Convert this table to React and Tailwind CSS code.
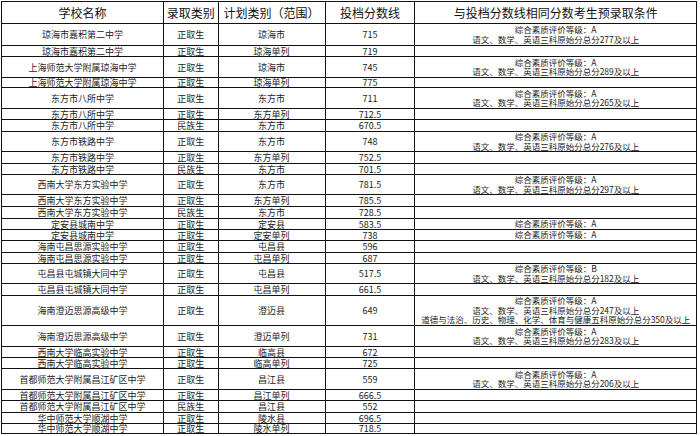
const COND_A = '综合素质评价等级：A';
const total = (n) => `语文、数学、英语三科原始分总分${n}及以上`;

const rows = [
  { h: 22, name: '琼海市嘉积第二中学', kind: '正取生', plan: '琼海市', score: '715', cond: [COND_A, total(277)] },
  { h: 11, name: '琼海市嘉积第二中学', kind: '正取生', plan: '琼海单列', score: '719' },
  { h: 21, name: '上海师范大学附属琼海中学', kind: '正取生', plan: '琼海市', score: '745', cond: [COND_A, total(289)] },
  { h: 10, name: '上海师范大学附属琼海中学', kind: '正取生', plan: '琼海单列', score: '775' },
  { h: 21, name: '东方市八所中学', kind: '正取生', plan: '东方市', score: '711', cond: [COND_A, total(265)] },
  { h: 11, name: '东方市八所中学', kind: '正取生', plan: '东方单列', score: '712.5' },
  { h: 12, name: '东方市八所中学', kind: '民族生', plan: '东方市', score: '670.5' },
  { h: 20, name: '东方市铁路中学', kind: '正取生', plan: '东方市', score: '748', cond: [COND_A, total(276)] },
  { h: 12, name: '东方市铁路中学', kind: '正取生', plan: '东方单列', score: '752.5' },
  { h: 11, name: '东方市铁路中学', kind: '民族生', plan: '东方市', score: '701.5' },
  { h: 20, name: '西南大学东方实验中学', kind: '正取生', plan: '东方市', score: '781.5', cond: [COND_A, total(297)] },
  { h: 12, name: '西南大学东方实验中学', kind: '正取生', plan: '东方单列', score: '785.5' },
  { h: 12, name: '西南大学东方实验中学', kind: '民族生', plan: '东方市', score: '728.5' },
  { h: 11, name: '定安县城南中学', kind: '正取生', plan: '定安县', score: '583.5', cond: [COND_A] },
  { h: 11, name: '定安县城南中学', kind: '正取生', plan: '定安单列', score: '738', cond: [COND_A] },
  { h: 12, name: '海南屯昌思源实验中学', kind: '正取生', plan: '屯昌县', score: '596' },
  { h: 11, name: '海南屯昌思源实验中学', kind: '正取生', plan: '屯昌单列', score: '687' },
  { h: 20, name: '屯昌县屯城镇大同中学', kind: '正取生', plan: '屯昌县', score: '517.5', cond: ['综合素质评价等级：B', total(182)] },
  { h: 12, name: '屯昌县屯城镇大同中学', kind: '正取生', plan: '屯昌单列', score: '661.5' },
  {
    h: 30, name: '海南澄迈思源高级中学', kind: '正取生', plan: '澄迈县', score: '649',
    cond: [COND_A, total(247), '道德与法治、历史、物理、化学、体育与健康五科原始分总分350及以上'],
  },
  { h: 21, name: '海南澄迈思源高级中学', kind: '正取生', plan: '澄迈单列', score: '731', cond: [COND_A, total(283)] },
  { h: 11, name: '西南大学临高实验中学', kind: '正取生', plan: '临高县', score: '672' },
  { h: 11, name: '西南大学临高实验中学', kind: '正取生', plan: '临高单列', score: '725' },
  { h: 21, name: '首都师范大学附属昌江矿区中学', kind: '正取生', plan: '昌江县', score: '559', cond: [COND_A, total(206)] },
  { h: 11, name: '首都师范大学附属昌江矿区中学', kind: '正取生', plan: '昌江单列', score: '666.5' },
  { h: 12, name: '首都师范大学附属昌江矿区中学', kind: '民族生', plan: '昌江县', score: '552' },
  { h: 11, name: '华中师范大学顺湖中学', kind: '正取生', plan: '陵水县', score: '696.5' },
  { h: 10, name: '华中师范大学顺湖中学', kind: '正取生', plan: '陵水单列', score: '718.5' },
];

const cell = 'flex items-center justify-center border-r border-[#111] whitespace-nowrap';

export default function App() {
  return (
    <div
      className="w-[700px] h-[436px] bg-white pt-px pl-px text-[#1c1c1c]"
      style={{ fontFamily: '"Noto Sans CJK SC", "Noto Sans", sans-serif' }}
    >
      <div className="w-[696px] border-t border-l border-[#111]">
        {/* header */}
        <div className="flex h-[22px] border-b border-[#111] text-[12px] leading-[14px] text-[#111]">
          <div className={`${cell} w-[162px]`}>学校名称</div>
          <div className={`${cell} w-[55px]`}>录取类别</div>
          <div className={`${cell} w-[107px]`}>计划类别（范围）</div>
          <div className={`${cell} w-[90px]`}>投档分数线</div>
          <div className={`${cell} w-[282px]`}>与投档分数线相同分数考生预录取条件</div>
        </div>

        {rows.map((r, i) => (
          <div key={i} className="flex border-b border-[#111] text-[9px] leading-[9px]" style={{ height: r.h }}>
            <div className={`${cell} w-[162px]`}>{r.name}</div>
            <div className={`${cell} w-[55px]`}>{r.kind}</div>
            <div className={`${cell} w-[107px]`}>{r.plan}</div>
            <div className={`${cell} w-[90px]`}>{r.score}</div>
            <div className={`${cell} w-[282px] flex-col text-[8.5px] leading-[9.5px]`}>
              {(r.cond || []).map((c, j) => (
                <span key={j}>{c}</span>
              ))}
            </div>
          </div>
        ))}
      </div>
    </div>
  );
}
